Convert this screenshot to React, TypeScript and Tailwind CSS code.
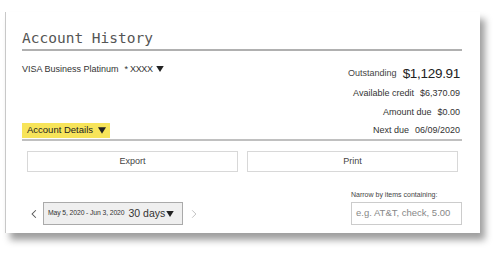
import React from "react";

const Tri = ({ className = "" }: { className?: string }) => (
  <svg viewBox="0 0 10 8" className={className} aria-hidden>
    <path d="M0 0 L10 0 L5 8 Z" fill="currentColor" />
  </svg>
);

export default function App() {
  return (
    <div
      className="w-[500px] h-[256px] bg-white pl-[5px] pt-[12px] overflow-hidden"
      style={{ fontFamily: '"Liberation Sans", Arial, sans-serif' }}
    >
      <div className="w-[475px] h-[221px] bg-white border-l border-[#c8c8c8] shadow-[5px_7px_7px_rgba(0,0,0,0.38)] pl-[16px] pr-[18px] pt-[16px] flex flex-col">
        <div
          className="h-[20px] leading-[20px] text-[14.5px] text-[#555]"
          style={{ fontFamily: '"DejaVu Sans Mono", "Liberation Mono", monospace' }}
        >
          Account History
        </div>
        <div className="h-[2px] bg-[#b0b0b0] mt-[1px]" />
        <div className="flex justify-between h-[88px]">
          <div className="flex flex-col justify-between">
            <div className="mt-[12px] flex items-center text-[9px] text-[#333] leading-[12px]">
              <span>VISA Business Platinum</span>
              <span className="ml-[6px] tracking-[-0.3px]">* XXXX</span>
              <Tri className="w-[8px] h-[6px] ml-[3px] text-[#222]" />
            </div>
            <div className="mb-[1px] w-[88px] h-[15px] bg-[#f7e45a] flex items-center pl-[5px] text-[9.5px] text-[#222]">
              <span>Account Details</span>
              <Tri className="w-[8px] h-[7px] ml-[5px] text-[#222]" />
            </div>
          </div>
          <div className="flex flex-col items-end pt-[13px] pr-[2px] text-[#333]">
            <div className="h-[20px] flex items-center">
              <span className="text-[9px] text-[#444]">Outstanding</span>
              <span className="ml-[6px] text-[13.5px] tracking-[-0.3px] text-[#222]">$1,129.91</span>
            </div>
            <div className="h-[19px] flex items-center text-[9px]">
              <span>Available credit</span>
              <span className="ml-[6px]">$6,370.09</span>
            </div>
            <div className="h-[19px] flex items-center text-[9px]">
              <span>Amount due</span>
              <span className="ml-[6px]">$0.00</span>
            </div>
            <div className="h-[17px] flex items-center text-[9px]">
              <span>Next due</span>
              <span className="ml-[6px]">06/09/2020</span>
            </div>
          </div>
        </div>
        <div className="h-[2px] bg-[#c0c0c0]" />
        <div className="flex gap-[9px] px-[5px] pr-[4px] mt-[10px]">
          <div className="flex-1 h-[21px] border border-[#d8d8d8] flex items-center justify-center text-[9px] text-[#444]">
            Export
          </div>
          <div className="flex-1 h-[21px] border border-[#d8d8d8] flex items-center justify-center text-[9px] text-[#444]">
            Print
          </div>
        </div>
        <div className="flex justify-between items-end mt-[18px]">
          <div className="flex items-center">
            <span className="w-[21px] pl-[9px] text-[#555]">
              <svg viewBox="0 0 8 12" className="w-[6px] h-[10px]">
                <path d="M6.5 1 L1.5 6 L6.5 11" stroke="currentColor" strokeWidth="1.4" fill="none" />
              </svg>
            </span>
            <div className="w-[140px] h-[23px] bg-[#efefef] border border-[#aaa] flex items-center pl-[4px] text-[#333]">
              <span className="text-[6.8px] tracking-[-0.1px]">May 5, 2020 - Jun 3, 2020</span>
              <span className="ml-[4px] text-[10.5px] leading-none">30 days</span>
              <Tri className="w-[8px] h-[6px] ml-[1px] text-[#222]" />
            </div>
            <span className="ml-[8px] text-[#bbb]">
              <svg viewBox="0 0 8 12" className="w-[6px] h-[10px]">
                <path d="M1.5 1 L6.5 6 L1.5 11" stroke="currentColor" strokeWidth="1.2" fill="none" />
              </svg>
            </span>
          </div>
          <div className="w-[111px] flex flex-col">
            <span className="text-[7px] text-[#444] leading-[9px] mb-[3px]">Narrow by items containing:</span>
            <div className="h-[23px] border border-[#ccc] flex items-center pl-[4px] text-[9.5px] text-[#888]">
              e.g. AT&amp;T, check, 5.00
            </div>
          </div>
        </div>
      </div>
    </div>
  );
}
